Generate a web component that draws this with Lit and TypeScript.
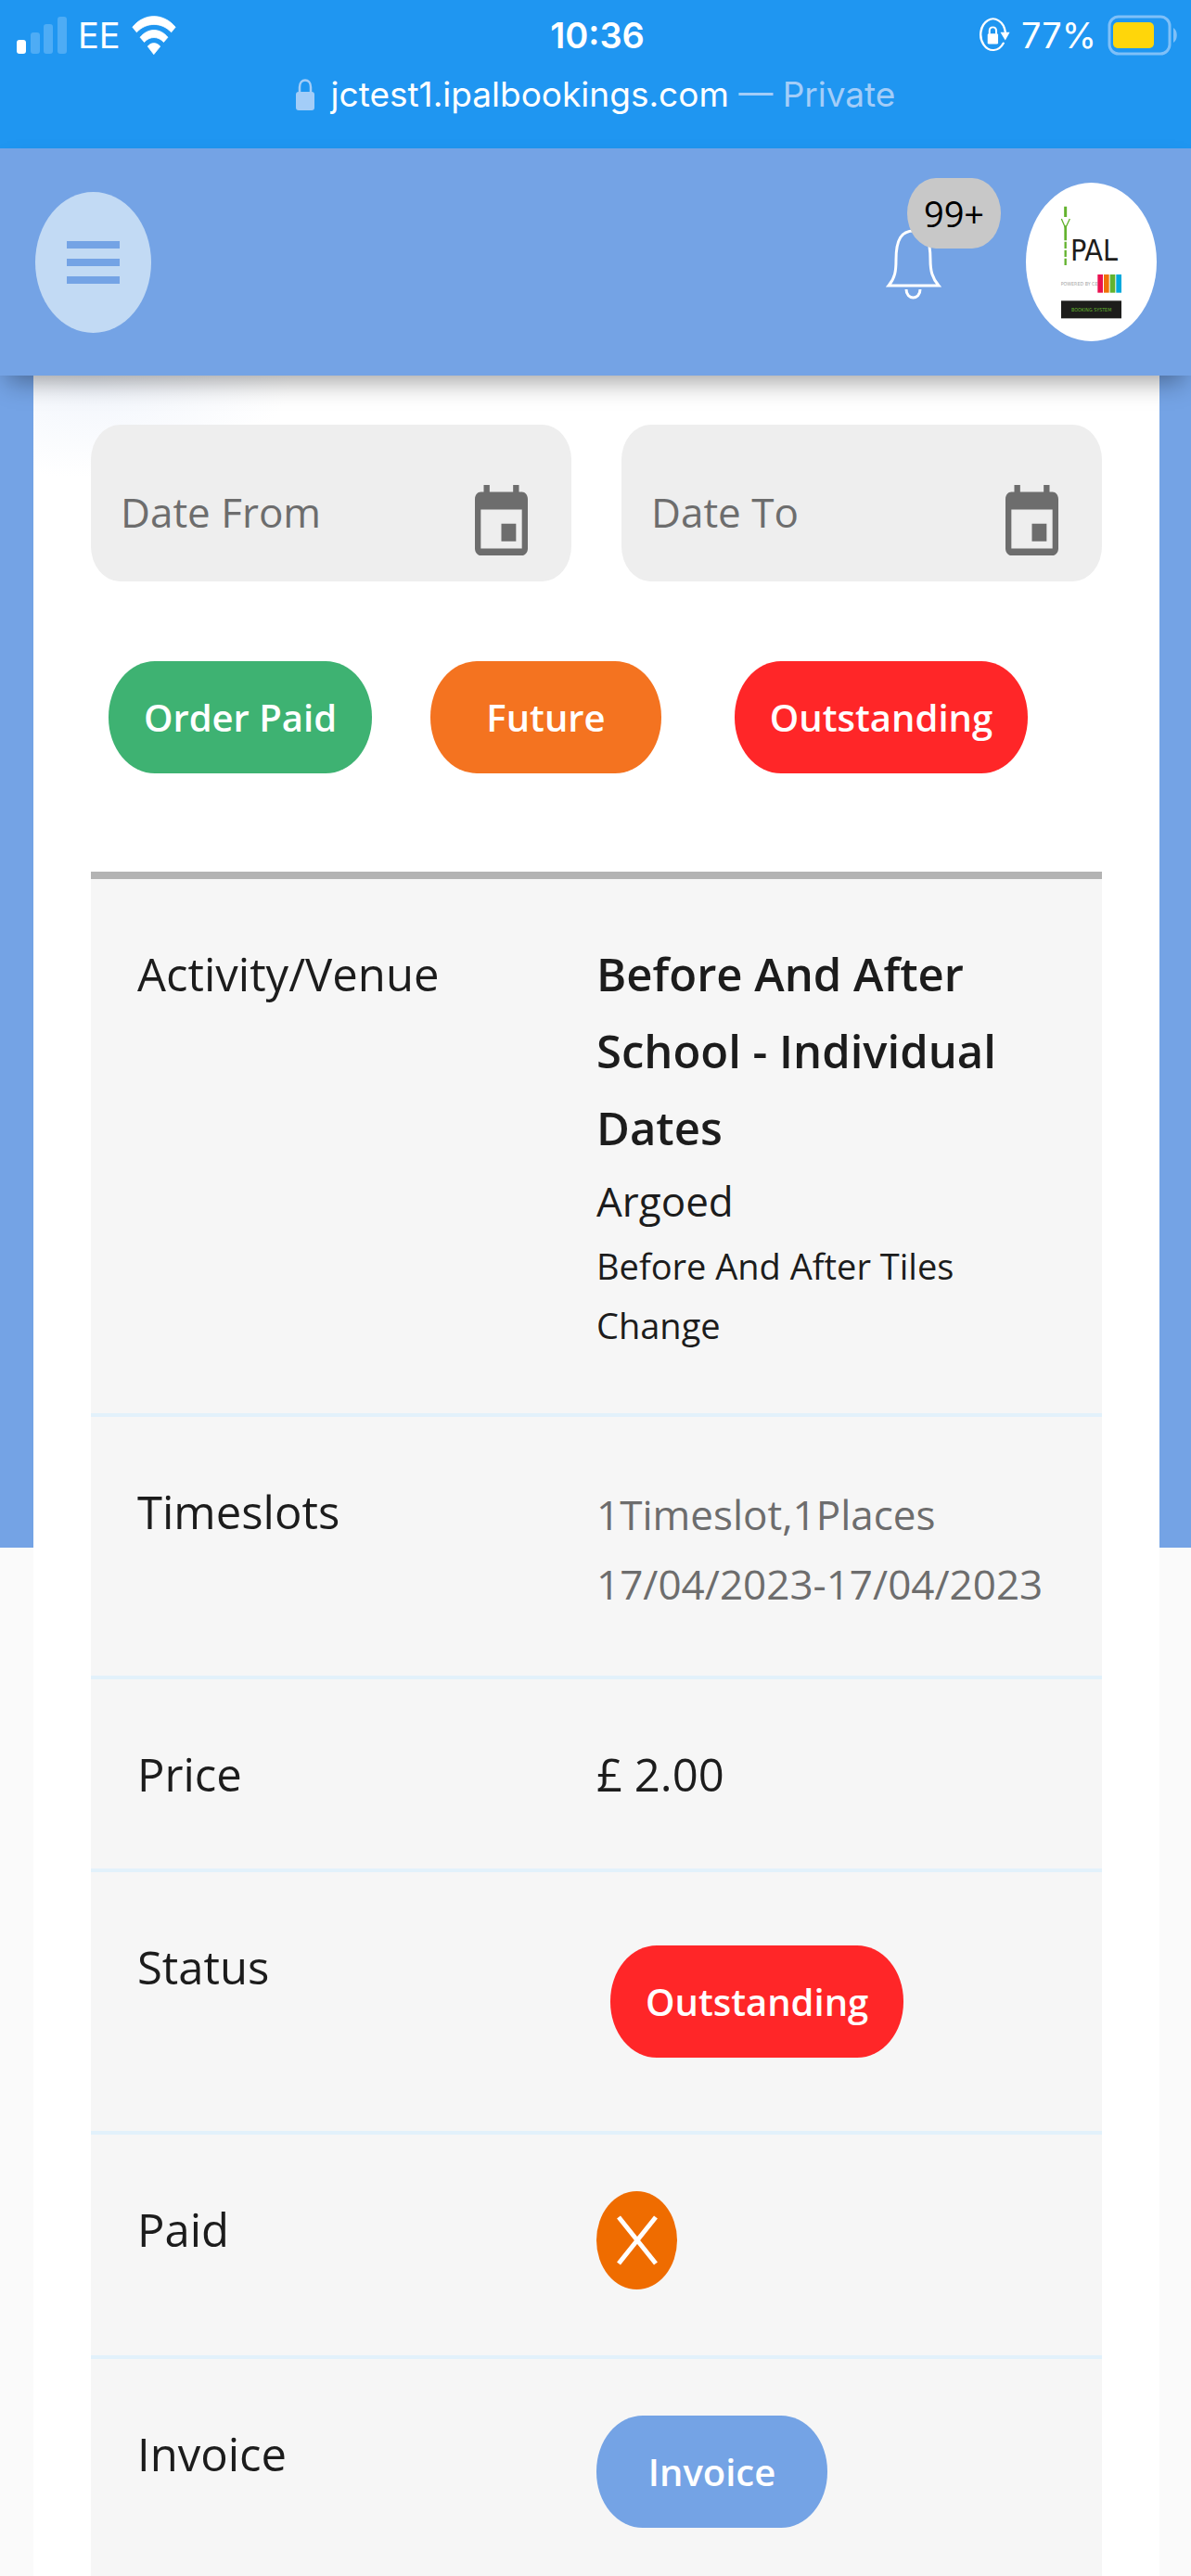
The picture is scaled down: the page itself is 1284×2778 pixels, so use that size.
import { LitElement, html, svg, css } from "lit";
import { customElement } from "lit/decorators.js";

/* ---------- Icons ---------- */

const signalIcon = html`<svg width="54" height="40" viewBox="0 0 54 40" aria-hidden="true">
  <rect x="0" y="25" width="10" height="15" rx="3" fill="#fff" />
  <rect x="15" y="17" width="10" height="23" rx="3" fill="#4eacf5" />
  <rect x="29" y="8" width="10" height="32" rx="3" fill="#4eacf5" />
  <rect x="44" y="0" width="10" height="40" rx="3" fill="#4eacf5" />
</svg>`;

const wifiIcon = html`<svg width="48" height="42" viewBox="345 47 117 127" preserveAspectRatio="none" aria-hidden="true">
  <g fill="#fff" stroke="#fff" stroke-width="2" stroke-linejoin="round">
    <path d="M347 84C378 37 428 37 460 84L449 101C424 67 383 67 358 101Z" />
    <path d="M367 117C388 86 419 86 440 117L429 133C414 113 393 113 378 133Z" />
    <path d="M387 147C396 133 410 133 420 147L403 173Z" />
  </g>
</svg>`;

const rotationLockIcon = html`<svg width="34" height="38" viewBox="1023 63 84 113" preserveAspectRatio="none" aria-hidden="true">
  <path d="M1094 108A33 50 0 1 0 1089 145" fill="none" stroke="#fff" stroke-width="6" stroke-linecap="round" />
  <path d="M1081 110H1106L1094 136Z" fill="#fff" />
  <rect x="1047" y="114" width="28" height="34" rx="4" fill="#fff" />
  <path d="M1052 116V106C1052 90 1070 90 1070 106V116" fill="none" stroke="#fff" stroke-width="5" />
</svg>`;

const batteryIcon = html`<svg width="76" height="44" viewBox="0 0 76 44" aria-hidden="true">
  <rect x="2" y="2" width="65" height="40" rx="10" fill="none" stroke="#7fc0f8" stroke-width="3" />
  <rect x="6" y="8" width="44" height="28" rx="5" fill="#ffd60a" />
  <path d="M71 14C76 17 76 27 71 30Z" fill="#7fc0f8" />
</svg>`;

const padlockIcon = html`<svg width="20" height="34" viewBox="0 0 20 34" aria-hidden="true">
  <rect x="0" y="14" width="20" height="20" rx="3" fill="#a3cdf8" />
  <path d="M4 16V9C4 -1 16 -1 16 9V16" fill="none" stroke="#a3cdf8" stroke-width="2.5" />
</svg>`;

const menuIcon = html`<svg width="57" height="46" viewBox="0 0 57 46" aria-hidden="true">
  <path d="M0 0H57V8H0ZM0 19H57V27H0ZM0 38H57V46H0Z" fill="#74a3e5" />
</svg>`;

const bellIcon = html`<svg width="60" height="78" viewBox="0 0 60 78" aria-hidden="true">
  <g fill="none" stroke="#fff" stroke-width="3">
    <path d="M3 62C10 54 11 46 11 34C11 12 17 3 30 3C43 3 48 12 48 34C48 46 50 54 57 62Z" />
    <path d="M22 66C22 78 37 78 37 66" />
  </g>
</svg>`;

const calendarIcon = html`<svg width="57" height="76" viewBox="3 1 18 20" preserveAspectRatio="none" aria-hidden="true">
  <path
    fill="#6d6d6d"
    d="M17 12h-5v5h5v-5zM16 1v2H8V1H6v2H5c-1.1 0-2 .9-2 2v14c0 1.1.9 2 2 2h14c1.1 0 2-.9 2-2V5c0-1.1-.9-2-2-2h-1V1h-2zm3 18H5V8h14v11z"
  />
</svg>`;

const crossIcon = html`<svg width="44" height="54" viewBox="0 0 44 54" aria-hidden="true">
  <path d="M2 2L42 52M42 2L2 52" stroke="#fff" stroke-width="5" />
</svg>`;

const stripes = ["#ea1150", "#f07008", "#63b32e", "#00a9dc"];

const logo = html`<svg class="logo" viewBox="48 51 423 513" role="img" aria-label="iPAL">
  <g fill="none" stroke="#63b32e">
    <path d="M176 128V162" stroke-width="9" />
    <path d="M163 168L176 198L190 168" stroke-width="4" />
    <path d="M176 190V238" stroke-width="8" />
    <path d="M176 242V320" stroke-width="7" stroke-dasharray="22 5" />
  </g>
  <text x="192" y="304" class="logo-name">PAL</text>
  <text x="161" y="384" class="logo-small" fill="#a5a5a5">POWERED BY CES</text>
  ${stripes.map((c, i) => svg`<rect x=${280 + i * 20} y="348" width="17" height="59" fill=${c} />`)}
  <rect x="162" y="433" width="195" height="57" fill="#1d1d1b" />
  <text x="260" y="469" class="logo-small" text-anchor="middle" fill="#63b32e">BOOKING SYSTEM</text>
</svg>`;

/* ---------- Browser status bar ---------- */

@customElement("status-bar")
class StatusBar extends LitElement {
  static styles = css`
    :host {
      display: block;
      background: #1f96f1;
      color: #fff;
      padding-bottom: 32px;
      font-family: Inter, "Liberation Sans", sans-serif;
      font-size: 38px;
      line-height: 48px;
    }
    .row {
      display: grid;
      grid-template-columns: 1fr auto 1fr;
      align-items: center;
      height: 76px;
      padding: 0 14px 0 18px;
    }
    .side {
      display: flex;
      align-items: center;
      gap: 12px;
    }
    .end {
      justify-content: flex-end;
    }
    .time {
      font-weight: 600;
    }
    .address {
      display: flex;
      justify-content: center;
      align-items: center;
      height: 52px;
      gap: 18px;
      font-size: 37px;
    }
    .private {
      color: #a3cdf8;
    }
    svg {
      display: block;
    }
  `;
  render() {
    return html`
      <div class="row">
        <div class="side">${signalIcon}<span>EE</span>${wifiIcon}</div>
        <span class="time">10:36</span>
        <div class="side end">${rotationLockIcon}<span>77%</span>${batteryIcon}</div>
      </div>
      <div class="address">
        ${padlockIcon}
        <span>jctest1.ipalbookings.com <span class="private">— Private</span></span>
      </div>
    `;
  }
}

/* ---------- Site header ---------- */

@customElement("site-header")
class SiteHeader extends LitElement {
  static styles = css`
    :host {
      display: flex;
      align-items: center;
      position: relative;
      z-index: 1;
      height: 245px;
      padding: 0 37px 0 38px;
      background: #74a3e5;
      box-shadow: 0 14px 26px -8px rgba(0, 0, 0, 0.38);
    }
    button {
      border: 0;
      padding: 0;
      background: none;
      font: inherit;
      cursor: pointer;
    }
    .menu {
      display: grid;
      place-items: center;
      width: 125px;
      height: 152px;
      margin-right: auto;
      border-radius: 50%;
      background: #c2daf4;
    }
    .alerts {
      position: relative;
      margin: 4px 91px 0 0;
    }
    .count {
      position: absolute;
      left: 23px;
      bottom: 56px;
      min-width: 101px;
      border-radius: 31px / 38px;
      background: #c8c8c8;
      color: #000;
      font-size: 38px;
      font-weight: 500;
      line-height: 76px;
      text-align: center;
    }
    .avatar {
      width: 141px;
      height: 171px;
      border-radius: 50%;
      background: #fff;
      overflow: hidden;
    }
    svg {
      display: block;
    }
    .logo {
      width: 100%;
      height: 100%;
    }
    .logo-name {
      font: 96px "Liberation Sans Narrow", "DejaVu Sans Condensed", sans-serif;
      fill: #1d1d1b;
    }
    .logo-small {
      font: 16px "Liberation Sans Narrow", "DejaVu Sans Condensed", sans-serif;
    }
  `;
  render() {
    return html`
      <button class="menu" aria-label="Menu">${menuIcon}</button>
      <button class="alerts" aria-label="Notifications">${bellIcon}<span class="count">99+</span></button>
      <button class="avatar" aria-label="Account">${logo}</button>
    `;
  }
}

/* ---------- Page ---------- */

@customElement("app-root")
class AppRoot extends LitElement {
  static styles = css`
    :host {
      display: flex;
      flex-direction: column;
      min-height: 100vh;
      font-family: "Open Sans", "Noto Sans", sans-serif;
      color: #1c1c1c;
    }
    main {
      flex: 1;
      display: flex;
      padding: 0 34px 0 36px;
      background: linear-gradient(#74a3e5 1264px, #fafafa 1264px);
    }
    .card {
      flex: 1;
      min-width: 0;
      padding: 53px 62px 0;
      background: radial-gradient(ellipse 220px 110px at 60px 0, #f1f5fc, #fff);
    }
    .dates {
      display: grid;
      grid-template-columns: repeat(2, minmax(0, 1fr));
      gap: 54px;
    }
    .field {
      display: flex;
      align-items: center;
      box-sizing: border-box;
      height: 169px;
      padding: 36px 47px 0 32px;
      border-radius: 31px / 38px;
      background: #eeeeee;
    }
    .field input {
      flex: 1;
      min-width: 0;
      width: 0;
      border: 0;
      padding: 0 0 18px;
      outline: 0;
      background: none;
      color: #6d6d6d;
      font: inherit;
      font-size: 44px;
    }
    .field input::placeholder {
      color: #6d6d6d;
      opacity: 1;
    }
    button {
      border: 0;
      padding: 0;
      background: none;
      font: inherit;
      cursor: pointer;
    }
    svg {
      display: block;
    }
    .filters {
      display: grid;
      grid-template-columns: 322fr 337fr 386fr 45fr;
      justify-items: center;
      margin: 86px 0 106px;
    }
    .pill {
      display: inline-block;
      box-sizing: border-box;
      min-width: 249px;
      padding: 0 38px;
      border-radius: 50px / 60px;
      color: #fff;
      font-size: 40px;
      font-weight: 600;
      line-height: 121px;
      text-align: center;
      text-decoration: none;
      white-space: nowrap;
      vertical-align: top;
    }
    .green {
      background: #3eb272;
    }
    .orange {
      background: #f47320;
    }
    .red {
      background: #ff2628;
    }
    .blue {
      background: #74a3e5;
    }
    .spaced {
      margin: 18px 15px;
    }
    table {
      width: 100%;
      table-layout: fixed;
      border-collapse: separate;
      border-spacing: 0;
      border-top: 8px solid #b3b3b3;
      background: #f6f6f6;
      font-size: 49px;
      line-height: 82px;
    }
    th,
    td {
      padding: 61px 0;
      border-bottom: 4px solid #e2f1fb;
      text-align: left;
      vertical-align: top;
      font-weight: 400;
    }
    th {
      padding-left: 50px;
    }
    td {
      padding-right: 50px;
    }
    tr:last-child > * {
      padding-bottom: 55px;
      border-bottom: 0;
    }
    p {
      margin: 0;
    }
    .title {
      font-weight: 600;
      line-height: 83px;
    }
    .venue {
      font-size: 44px;
      line-height: 75px;
    }
    .note {
      padding-bottom: 2px;
      font-size: 38px;
      line-height: 64px;
    }
    .slots {
      padding-top: 7px;
      color: #6d6d6d;
      font-size: 44px;
      line-height: 75px;
    }
    .unpaid {
      display: grid;
      place-items: center;
      width: 87px;
      height: 106px;
      margin-bottom: 10px;
      border-radius: 50%;
      background: #ef6c00;
    }
  `;

  private dateField(label: string) {
    return html`<div class="field">
      <input type="text" placeholder=${label} aria-label=${label} />
      <button aria-label="Open calendar">${calendarIcon}</button>
    </div>`;
  }

  private rows = [
    {
      label: "Activity/Venue",
      value: html`<p class="title">Before And After School - Individual Dates</p>
        <p class="venue">Argoed</p>
        <p class="note">Before And After Tiles Change</p>`,
    },
    {
      label: "Timeslots",
      value: html`<div class="slots"><p>1Timeslot,1Places</p><p>17/04/2023-17/04/2023</p></div>`,
    },
    { label: "Price", value: html`£ 2.00` },
    { label: "Status", value: html`<span class="pill red spaced">Outstanding</span>` },
    { label: "Paid", value: html`<span class="unpaid" role="img" aria-label="Not paid">${crossIcon}</span>` },
    { label: "Invoice", value: html`<a class="pill blue" href="#invoice">Invoice</a>` },
  ];

  render() {
    return html`
      <status-bar></status-bar>
      <site-header></site-header>
      <main>
        <section class="card">
          <div class="dates">${this.dateField("Date From")}${this.dateField("Date To")}</div>
          <div class="filters">
            <button class="pill green">Order Paid</button>
            <button class="pill orange">Future</button>
            <button class="pill red">Outstanding</button>
          </div>
          <table>
            <tbody>
              ${this.rows.map((r) => html`<tr><th scope="row">${r.label}</th><td>${r.value}</td></tr>`)}
            </tbody>
          </table>
        </section>
      </main>
    `;
  }
}
